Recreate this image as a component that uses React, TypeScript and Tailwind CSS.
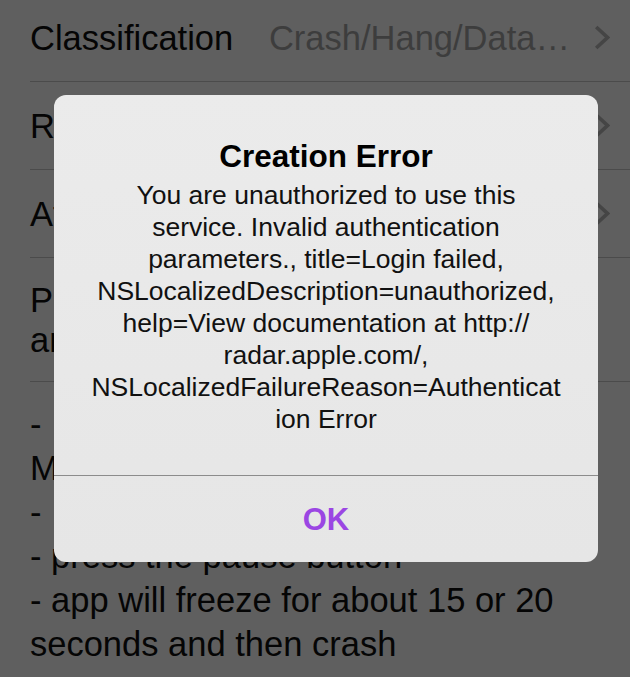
import React from "react";

const Chevron = () => (
  <svg width="16" height="25" viewBox="0 0 16 25" className="shrink-0">
    <path d="M2.2 2 L13.5 12.5 L2.2 23" fill="none" stroke="#454545" strokeWidth="3.6" strokeLinecap="butt" strokeLinejoin="miter" />
  </svg>
);

const Row = ({ label, value, first }: { label: string; value: string; first?: boolean }) => (
  <div className={first ? "pl-[30px] -mt-[6px]" : "pl-[30px]"}>
    <div className="h-[88px] flex items-center border-b border-[#4b4b4b] pr-[20px]">
      <span className="text-[#050505] leading-[40px] whitespace-nowrap">{label}</span>
      <span className="flex-1" />
      <span className="text-[#3d3d3d] leading-[40px] whitespace-nowrap">{value}</span>
      <span className="w-[24px]" />
      <Chevron />
    </div>
  </div>
);

const messageLines = [
  "You are unauthorized to use this",
  "service. Invalid authentication",
  "parameters., title=Login failed,",
  "NSLocalizedDescription=unauthorized,",
  "help=View documentation at http://",
  "radar.apple.com/,",
  "NSLocalizedFailureReason=Authenticat",
  "ion Error",
];

export default function App() {
  return (
    <div className="relative w-[630px] h-[677px] overflow-hidden bg-[#5f5f5f] font-['Liberation_Sans',Arial,sans-serif] text-[34.5px]">
      <Row first label="Classification" value="Crash/Hang/Data…" />
      <Row label="Reproducibility" value="Always" />
      <Row label="Attachments" value="None" />
      <div className="pl-[30px]">
        <div className="border-b border-[#4b4b4b] pt-[22px] pb-[21px] leading-[40px] text-[#050505]">
          <div>Please describe the</div>
          <div>and steps</div>
        </div>
      </div>
      <div className="pl-[30px] pt-[20px] leading-[44px] text-[#050505]">
        <div className="whitespace-nowrap">
          - <span className="ml-[8px]">open a video</span>
        </div>
        <div className="whitespace-nowrap">Mac or iPhone</div>
        <div className="whitespace-nowrap">
          - <span className="ml-[8px]">tap the video</span>
        </div>
        <div className="whitespace-nowrap">- press the pause button</div>
        <div className="whitespace-nowrap">- app will freeze for about 15 or 20</div>
        <div className="whitespace-nowrap">seconds and then crash</div>
      </div>

      <div className="absolute left-[54px] top-[95px] w-[544px] h-[467px] rounded-[12px] overflow-hidden bg-gradient-to-b from-[#ebebeb] to-[#e6e6e6] flex flex-col">
        <div className="h-[380px] pt-[43px] flex flex-col items-center text-center">
          <div className="text-[31.5px] leading-[36px] font-bold text-black">Creation Error</div>
          <div className="mt-[5px] text-[26.5px] leading-[32px] text-[#111111]">
            {messageLines.map((l, i) => (
              <div key={i} className="whitespace-nowrap">{l}</div>
            ))}
          </div>
        </div>
        <div className="h-px bg-[#8c8c8c]" />
        <div className="h-[86px] flex items-center justify-center">
          <span className="text-[31px] font-bold text-[#9b46e3] leading-none">OK</span>
        </div>
      </div>
    </div>
  );
}
